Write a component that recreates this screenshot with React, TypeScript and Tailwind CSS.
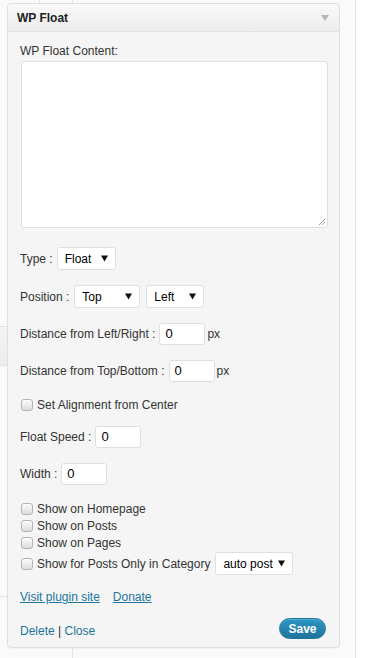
import React from "react";

function Select({ label, w }: { label: string; w: number }) {
  return (
    <div
      className="h-[23px] flex items-center justify-between pl-[7px] pr-[7px] bg-white border border-[#dfdfdf] rounded-[3px] text-[12px] text-black"
      style={{ width: w }}
    >
      <span>{label}</span>
      <svg width="7" height="7" viewBox="0 0 7 7">
        <polygon points="0,0.5 7,0.5 3.5,6.5" fill="#111" />
      </svg>
    </div>
  );
}

function Input({ w = 46 }: { w?: number }) {
  return (
    <div
      className="h-[22px] flex items-center pl-[5px] bg-white border border-[#dfdfdf] rounded-[3px] text-[13px] text-black"
      style={{ width: w }}
    >
      0
    </div>
  );
}

function Check({ label }: { label: string }) {
  return (
    <div className="flex items-center gap-[4px]">
      <div className="w-[12px] h-[12px] rounded-[3px] border border-[#b4b4b4] bg-gradient-to-b from-[#fdfdfd] to-[#dcdcdc]" />
      <span>{label}</span>
    </div>
  );
}

export default function App() {
  return (
    <div className="flex w-[371px] h-[658px] bg-white overflow-hidden font-['Liberation_Sans',Arial,sans-serif] text-[12px] text-[#333]">
      <div className="relative w-[356px] h-full bg-[#fafafa] border-r border-[#e5e5e5] pl-[7px] pt-[3px]">
        {/* background fragments */}
        <div className="absolute left-[39px] top-0 w-px h-[3px] bg-[#e3e3e3]" />
        <div className="absolute left-[72px] top-0 w-px h-[3px] bg-[#e3e3e3]" />
        <div className="absolute left-[72px] top-[648px] w-px h-[10px] bg-[#e3e3e3]" />
        <div className="absolute left-0 top-[326px] w-[7px] h-[40px] border-t border-b border-[#e3e3e3] bg-gradient-to-b from-[#f4f4f4] to-[#ececec]" />
        <div className="absolute left-0 top-[596px] w-[7px] h-px bg-[#e3e3e3]" />

        <div className="relative w-[333px] h-[645px] border border-[#dfdfdf] rounded-[4px] bg-[#f5f5f5] shadow-[0_1px_1px_rgba(0,0,0,0.04)] flex flex-col">
          <div className="h-[28px] flex items-center justify-between pl-[9px] pr-[9px] border-b border-[#dfdfdf] rounded-t-[4px] bg-gradient-to-b from-[#f9f9f9] to-[#ececec]">
            <span className="font-bold text-[12px] text-[#222]">WP Float</span>
            <svg width="8" height="6" viewBox="0 0 8 6" className="mr-[1px]">
              <polygon points="0,0 8,0 4,6" fill="#b5b5b5" />
            </svg>
          </div>

          <div className="flex flex-col pl-[12px] pr-[12px]">
            <div className="mt-[11px] h-[16px] leading-[16px]">WP Float Content:</div>
            <div className="relative mt-[2px] ml-[1px] w-[307px] h-[167px] bg-white border border-[#dfdfdf] rounded-[3px]">
              <svg width="7" height="7" viewBox="0 0 7 7" className="absolute right-[2px] bottom-[2px]">
                <line x1="1" y1="7" x2="7" y2="1" stroke="#888" strokeWidth="0.8" />
                <line x1="4" y1="7" x2="7" y2="4" stroke="#888" strokeWidth="0.8" />
              </svg>
            </div>

            <div className="mt-[19px] flex items-center gap-[4px]">
              <span>Type :</span>
              <Select label="Float" w={59} />
            </div>

            <div className="mt-[15px] flex items-center gap-[4px]">
              <span className="mr-[1px]">Position :</span>
              <Select label="Top" w={66} />
              <div className="ml-[2px]">
                <Select label="Left" w={58} />
              </div>
            </div>

            <div className="mt-[15px] flex items-center gap-[4px]">
              <span>Distance from Left/Right :</span>
              <Input />
              <span className="-ml-[2px]">px</span>
            </div>

            <div className="mt-[15px] flex items-center gap-[4px]">
              <span>Distance from Top/Bottom :</span>
              <Input />
              <span className="-ml-[2px]">px</span>
            </div>

            <div className="mt-[15px] h-[16px] flex items-center ml-[1px]">
              <Check label="Set Alignment from Center" />
            </div>

            <div className="mt-[13px] flex items-center gap-[4px]">
              <span>Float Speed :</span>
              <Input />
            </div>

            <div className="mt-[15px] flex items-center gap-[4px]">
              <span>Width :</span>
              <Input />
            </div>

            <div className="mt-[15px] flex flex-col ml-[1px]">
              <div className="h-[17px] flex items-center">
                <Check label="Show on Homepage" />
              </div>
              <div className="h-[17px] flex items-center">
                <Check label="Show on Posts" />
              </div>
              <div className="h-[17px] flex items-center">
                <Check label="Show on Pages" />
              </div>
              <div className="mt-[1px] flex items-center gap-[5px]">
                <Check label="Show for Posts Only in Category" />
                <Select label="auto post" w={78} />
              </div>
            </div>

            <div className="mt-[14px] h-[16px] flex items-center gap-[13px] text-[#21759b]">
              <span className="underline">Visit plugin site</span>
              <span className="underline">Donate</span>
            </div>

            <div className="mt-[13px] h-[21px] flex justify-between items-start">
              <div className="mt-[5px] h-[16px] leading-[16px] text-[#21759b]">
                Delete <span className="text-[#333]">|</span> Close
              </div>
              <div className="mr-[1px] w-[47px] h-[21px] rounded-full flex items-center justify-center text-white font-bold text-[12px] bg-gradient-to-b from-[#2a95c5] to-[#21759b] border border-[#21759b] shadow-[inset_0_1px_0_rgba(120,200,230,0.5)]">
                Save
              </div>
            </div>
          </div>
        </div>
      </div>
      <div className="flex-1 bg-white" />
    </div>
  );
}
